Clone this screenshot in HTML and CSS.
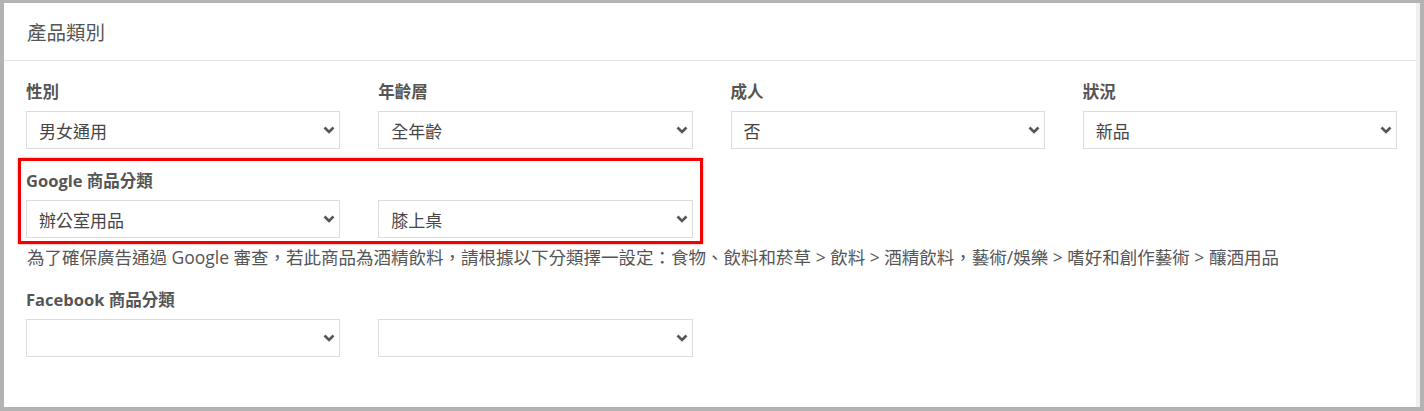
FILE: index.html
```html
<!DOCTYPE html>
<html lang="zh-Hant">

<head>
<title>產品類別</title>
<meta charset="UTF-8">
<meta name="viewport" content="width=device-width, initial-scale=1.0">
<link rel="stylesheet" href="styles.css">
</head>

<body>
<div class="panel">
<div class="panel-heading">產品類別</div>

<div class="panel-body">
<div class="grid">
<div class="field">
<label>性別</label>
<div class="select"><span>男女通用</span><svg class="caret" viewBox="0 0 12 8"><path d="M1.5 1.5 L6 6 L10.5 1.5"/></svg></div>
</div><div class="field">
<label>年齡層</label>
<div class="select"><span>全年齡</span><svg class="caret" viewBox="0 0 12 8"><path d="M1.5 1.5 L6 6 L10.5 1.5"/></svg></div>
</div><div class="field">
<label>成人</label>
<div class="select"><span>否</span><svg class="caret" viewBox="0 0 12 8"><path d="M1.5 1.5 L6 6 L10.5 1.5"/></svg></div>
</div><div class="field">
<label>狀況</label>
<div class="select"><span>新品</span><svg class="caret" viewBox="0 0 12 8"><path d="M1.5 1.5 L6 6 L10.5 1.5"/></svg></div>
</div>
</div>

<div class="category highlight">
<label>Google 商品分類</label>
<div class="select"><span>辦公室用品</span><svg class="caret" viewBox="0 0 12 8"><path d="M1.5 1.5 L6 6 L10.5 1.5"/></svg></div>
<div class="select"><span>膝上桌</span><svg class="caret" viewBox="0 0 12 8"><path d="M1.5 1.5 L6 6 L10.5 1.5"/></svg></div>
</div>
<p class="help">為了確保廣告通過 Google 審查，若此商品為酒精飲料，請根據以下分類擇一設定：食物、飲料和菸草 &gt; 飲料 &gt; 酒精飲料，藝術/娛樂 &gt; 嗜好和創作藝術 &gt; 釀酒用品</p>

<div class="category facebook">
<label>Facebook 商品分類</label>
<div class="select"><span></span><svg class="caret" viewBox="0 0 12 8"><path d="M1.5 1.5 L6 6 L10.5 1.5"/></svg></div>
<div class="select"><span></span><svg class="caret" viewBox="0 0 12 8"><path d="M1.5 1.5 L6 6 L10.5 1.5"/></svg></div>
</div>
</div>
</div>
</body>
</html>
```

FILE: styles.css
```css
body {
    margin: 0;
    background-color: #b3b3b3;
    font-family: "Open Sans", "Noto Sans CJK TC", sans-serif;
    color: #555;
}
.panel {
    box-sizing: border-box;
    height: 404px;
    margin: 3px 4px 4px 4px;
    background-color: #fff;
    border-right: 4px solid #f0f0f0;
}
.panel-heading {
    display: flex;
    align-items: center;
    height: 57px;
    padding-left: 23px;
    border-bottom: 1px solid #e3e3e3;
    font-size: 19.5px;
    color: #555;
}
.panel-body {
    padding: 20px 19px 0 22px;
}
.grid {
    display: grid;
    grid-template-columns: repeat(4, 1fr);
    column-gap: 38px;
}
label {
    display: block;
    margin-bottom: 8px;
    font-size: 16.5px;
    font-weight: 700;
    line-height: 22px;
    color: #555;
}
.select {
    box-sizing: border-box;
    display: flex;
    align-items: center;
    justify-content: space-between;
    height: 38px;
    padding: 0 4px 0 12px;
    border: 1px solid #dcdcdc;
    font-size: 17px;
    color: #444;
}
.caret {
    width: 12px;
    height: 8px;
    fill: none;
    stroke: #555;
    stroke-width: 2.6;
}
.category {
    display: grid;
    grid-template-columns: 1fr 1fr;
    column-gap: 38px;
    width: calc(50% - 19px);
}
.category > label {
    grid-column: 1 / -1;
}
.highlight {
    position: relative;
    margin-top: 21px;
}
.highlight::after {
    content: "";
    position: absolute;
    top: -12px;
    left: -8px;
    right: -10px;
    bottom: -6px;
    border: 3px solid #f20000;
    box-shadow: 0 0 2px rgba(255, 0, 0, 0.5);
    pointer-events: none;
}
.help {
    margin: 7px 0 0 1px;
    font-size: 17.5px;
    line-height: 24px;
    color: #555;
    white-space: nowrap;
}
.facebook {
    margin-top: 20px;
}
```
